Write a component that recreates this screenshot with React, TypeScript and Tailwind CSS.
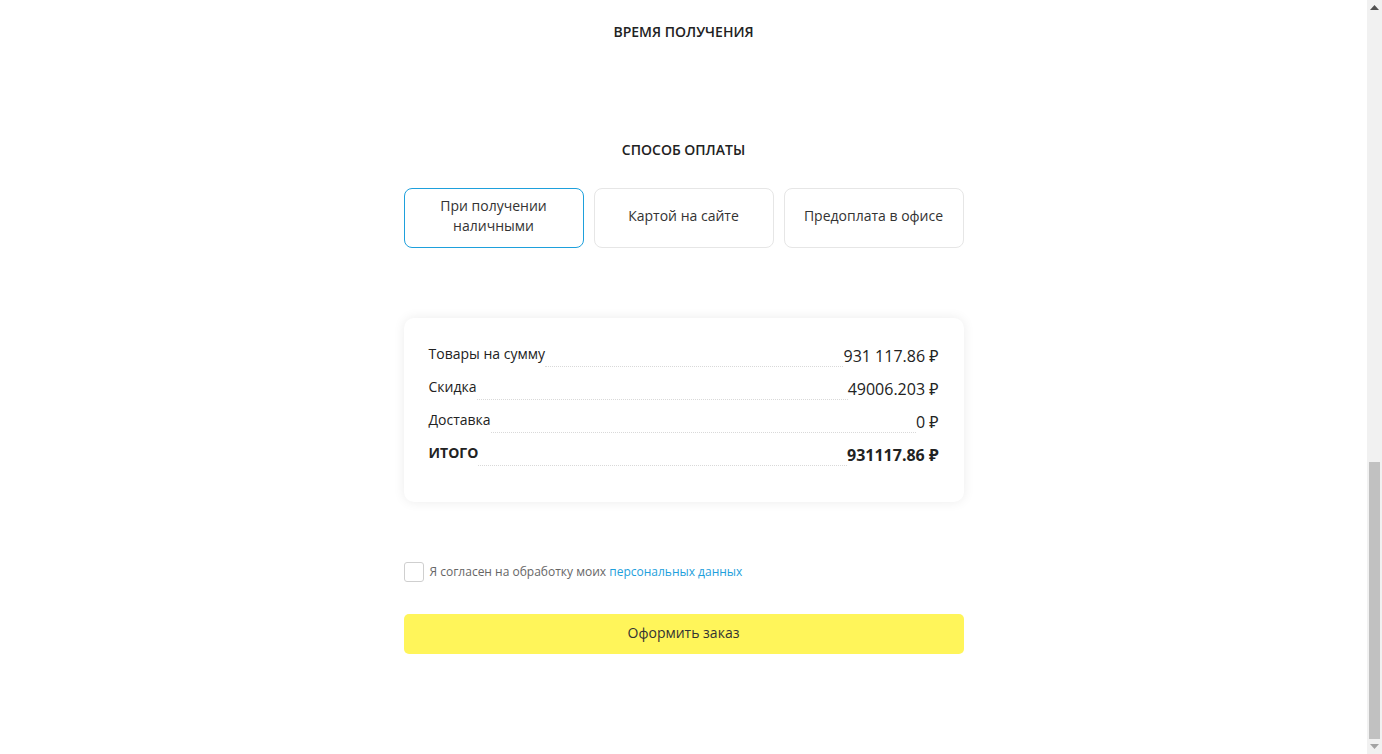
import React from "react";

const font = { fontFamily: '"Open Sans", "Noto Sans", sans-serif' };

function Row({ label, value, bold }: { label: string; value: string; bold?: boolean }) {
  return (
    <div className="flex items-end h-[22px]">
      <span className={`text-[14px] leading-[20px] pb-[3px] text-[#222] ${bold ? "font-bold" : ""}`}>{label}</span>
      <span className="flex-1 mb-0 border-b border-dotted border-[#d9d9d9]"></span>
      <span className={`text-[16px] leading-[22px] text-[#222] ${bold ? "font-bold" : ""}`}>{value}</span>
    </div>
  );
}

export default function App() {
  return (
    <div className="flex h-[754px] w-[1382px] overflow-hidden bg-white" style={font}>
      <div className="flex-1 flex flex-col items-center">
        <div className="w-[560px] flex flex-col">
          <h2 className="pt-[22px] text-center text-[14px] leading-[20px] font-semibold text-[#222]">ВРЕМЯ ПОЛУЧЕНИЯ</h2>
          <h2 className="mt-[98px] text-center text-[14px] leading-[20px] font-semibold text-[#222]">СПОСОБ ОПЛАТЫ</h2>
          <div className="mt-[28px] grid grid-cols-3 gap-[10px]">
            <div className="h-[60px] rounded-[8px] border border-[#1ea0dc] flex items-center justify-center text-center text-[14px] leading-[20px] text-[#333] px-4 pb-[4px]">
              При получении<br />наличными
            </div>
            <div className="h-[60px] rounded-[8px] border border-[#e6e6e6] flex items-center justify-center text-center text-[14px] leading-[20px] text-[#333] pb-[4px]">
              Картой на сайте
            </div>
            <div className="h-[60px] rounded-[8px] border border-[#e6e6e6] flex items-center justify-center text-center text-[14px] leading-[20px] text-[#333] pb-[4px]">
              Предоплата в офисе
            </div>
          </div>
          <div className="mt-[70px] h-[184px] rounded-[10px] bg-white shadow-[0_0_12px_rgba(0,0,0,0.08)] px-[25px] pt-[27px] flex flex-col gap-[11px]">
            <Row label="Товары на сумму" value="931 117.86 ₽" />
            <Row label="Скидка" value="49006.203 ₽" />
            <Row label="Доставка" value="0 ₽" />
            <Row label="ИТОГО" value="931117.86 ₽" bold />
          </div>
          <div className="mt-[60px] flex items-center gap-[6px]">
            <span className="w-[20px] h-[20px] rounded-[3px] border border-[#cfcfcf] bg-white"></span>
            <span className="text-[12px] leading-[18px] text-[#666]">
              Я согласен на обработку моих <span className="text-[#1ea0dc]">персональных данных</span>
            </span>
          </div>
          <button className="mt-[32px] h-[40px] w-full rounded-[5px] bg-[#fff55a] text-[14px] leading-[20px] text-[#333] pb-[3px]" style={font}>
            Оформить заказ
          </button>
        </div>
      </div>
      <div className="w-[15px] h-full bg-[#f1f1f1] flex flex-col items-center">
        <div className="h-[15px] flex items-center justify-center">
          <svg width="9" height="5" viewBox="0 0 9 5"><polygon points="4.5,0 9,5 0,5" fill="#505050" /></svg>
        </div>
        <div className="flex-1 w-full flex flex-col justify-end px-[2px]">
          <div className="h-[277px] bg-[#c1c1c1]"></div>
        </div>
        <div className="h-[15px] flex items-center justify-center">
          <svg width="9" height="5" viewBox="0 0 9 5"><polygon points="0,0 9,0 4.5,5" fill="#a3a3a3" /></svg>
        </div>
      </div>
    </div>
  );
}
